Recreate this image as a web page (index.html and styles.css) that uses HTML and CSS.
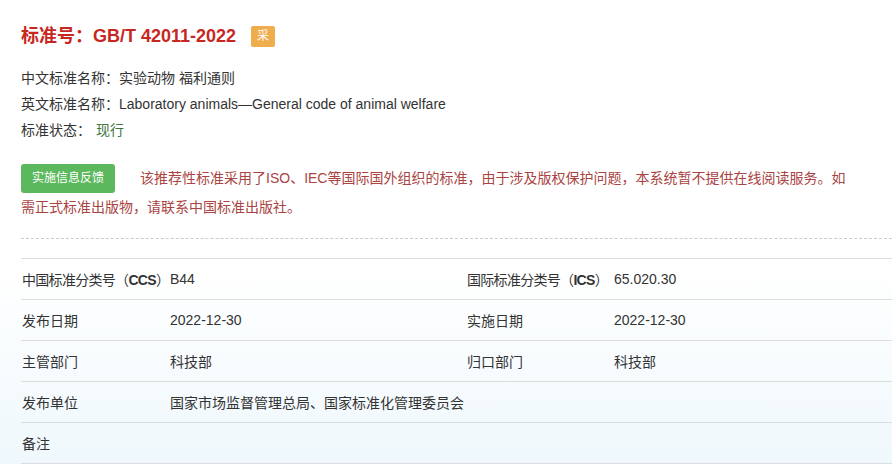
FILE: index.html
```html
<!DOCTYPE html>
<html lang="zh-CN">
<head>
    <meta charset="UTF-8">
    <title>GB/T 42011-2022 实验动物 福利通则</title>
    <link rel="stylesheet" href="styles.css">
</head>
<body>
    <div class="page">
        <h1 class="title">标准号：GB/T 42011-2022 <span class="badge">采</span></h1>

        <div class="names">
            <p>中文标准名称：实验动物 福利通则</p>
            <p>英文标准名称：Laboratory animals—General code of animal welfare</p>
            <p>标准状态：<span class="status">现行</span></p>
        </div>

        <div class="notice">
            <button class="feedback-btn">实施信息反馈</button>
            <p>该推荐性标准采用了ISO、IEC等国际国外组织的标准，由于涉及版权保护问题，本系统暂不提供在线阅读服务。如需正式标准出版物，请联系中国标准出版社。</p>
        </div>

        <hr class="dashed">

        <table class="info">
            <tr>
                <td class="label code">中国标准分类号（<b>CCS</b>）</td>
                <td class="value">B44</td>
                <td class="label code">国际标准分类号（<b>ICS</b>）</td>
                <td class="value">65.020.30</td>
            </tr>
            <tr>
                <td class="label">发布日期</td>
                <td class="value">2022-12-30</td>
                <td class="label">实施日期</td>
                <td class="value">2022-12-30</td>
            </tr>
            <tr>
                <td class="label">主管部门</td>
                <td class="value">科技部</td>
                <td class="label">归口部门</td>
                <td class="value">科技部</td>
            </tr>
            <tr>
                <td class="label">发布单位</td>
                <td class="value" colspan="3">国家市场监督管理总局、国家标准化管理委员会</td>
            </tr>
            <tr>
                <td class="label">备注</td>
                <td class="value" colspan="3"></td>
            </tr>
        </table>
    </div>
</body>
</html>
```

FILE: styles.css
```css
html {
    min-height: 100%;
    background: linear-gradient(to bottom, #fff 270px, #eff8fc 464px);
}
body {
    margin: 0;
    font-family: "Liberation Sans", "Noto Sans CJK SC", sans-serif;
    font-size: 14px;
    color: #333;
    overflow: hidden;
}
.page {
    padding: 24px 0 0 21px;
}
.title {
    margin: 0;
    font-size: 18px;
    line-height: 24px;
    color: #c8271f;
    font-weight: bold;
}
.badge {
    display: inline-block;
    margin-left: 10px;
    width: 24px;
    height: 21px;
    line-height: 21px;
    border-radius: 2px;
    background: #f0ad4e;
    color: #fff;
    font-size: 12px;
    font-weight: normal;
    text-align: center;
    vertical-align: 2px;
}
.names {
    margin-top: 17px;
}
.names p {
    margin: 0;
    line-height: 26px;
}
.status {
    margin-left: 5px;
    color: #3c763d;
}
.notice {
    margin: 21px 42px 0 0;
    line-height: 29px;
    color: #a94442;
}
.notice p {
    margin: 0;
}
.feedback-btn {
    float: left;
    margin-right: 25px;
    padding: 6px 11px;
    border: none;
    border-radius: 3px;
    background: #5cb85c;
    color: #fff;
    font-family: inherit;
    font-size: 12px;
    line-height: 17px;
}
.dashed {
    margin: 16px 0 0;
    border: none;
    border-top: 1px dashed #ccc;
}
.info {
    width: 100%;
    margin-top: 19px;
    border-collapse: collapse;
    table-layout: fixed;
}
.info td {
    height: 40px;
    padding: 0;
    border-top: 1px solid #ddd;
    border-bottom: 1px solid #ddd;
    white-space: nowrap;
}
.info td.label {
    padding-left: 1px;
}
.info td.code {
    letter-spacing: -0.7px;
}
.info tr td:nth-child(1) {
    width: 148px;
}
.info tr td:nth-child(2) {
    width: 296px;
}
.info tr td:nth-child(3) {
    width: 147px;
}
```
